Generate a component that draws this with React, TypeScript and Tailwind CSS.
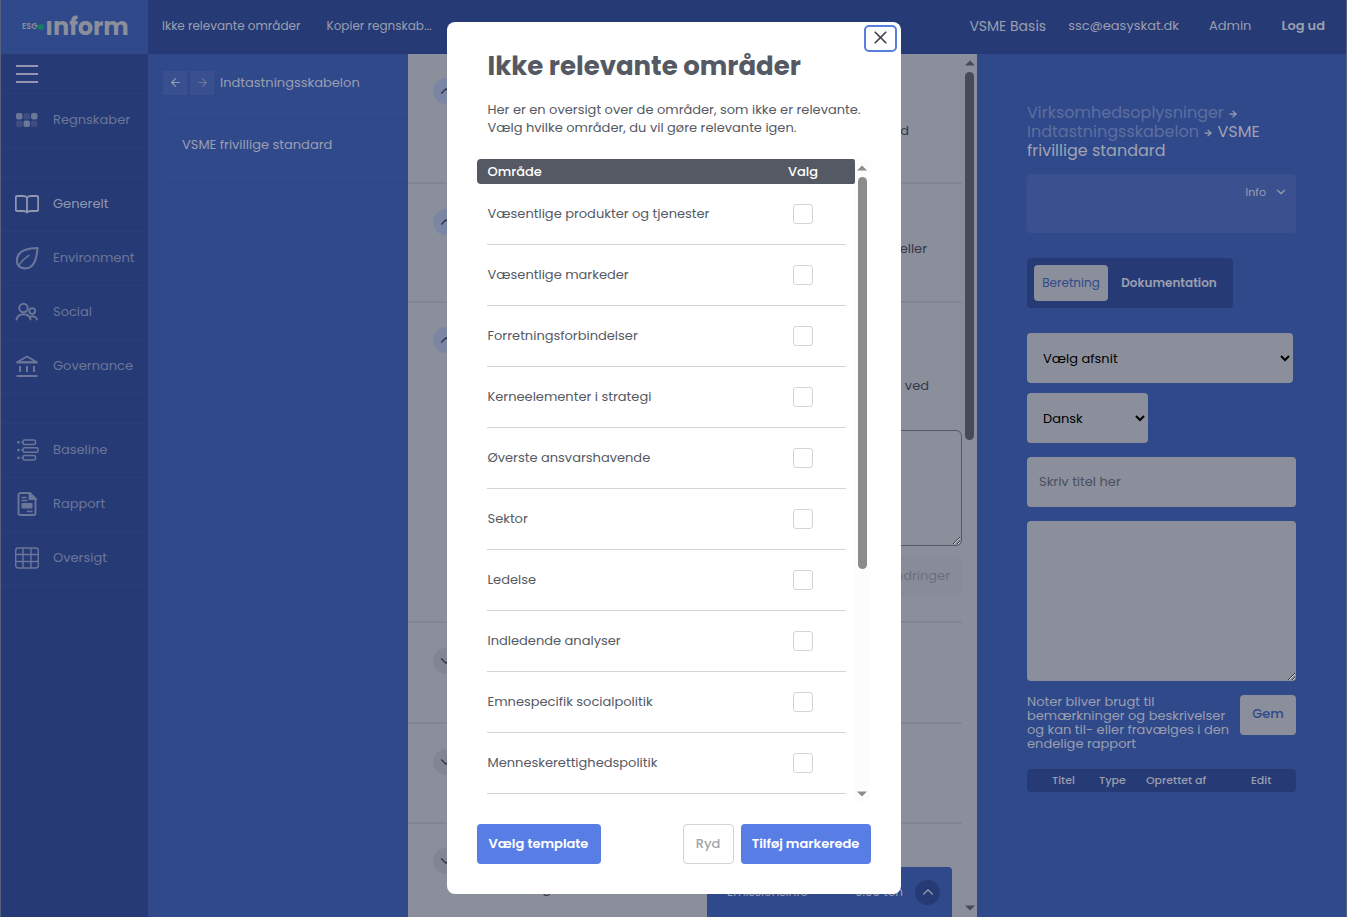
import type { ReactNode } from "react";
import { ArrowLeft, ArrowRight, ChevronDown, ChevronUp, X } from "lucide-react";

const omraader = [
  "Væsentlige produkter og tjenester",
  "Væsentlige markeder",
  "Forretningsforbindelser",
  "Kerneelementer i strategi",
  "Øverste ansvarshavende",
  "Sektor",
  "Ledelse",
  "Indledende analyser",
  "Emnespecifik socialpolitik",
  "Menneskerettighedspolitik",
];

function GridIcon() {
  return (
    <svg width="24" height="24" viewBox="0 0 24 24" fill="currentColor">
      <rect x="1" y="5" width="6.500" height="6.500" rx="2" />
      <rect x="8.500" y="5" width="6.500" height="6.500" rx="2" opacity=".35" />
      <rect x="16" y="5" width="6.500" height="6.500" rx="2" />
      <rect x="1" y="12.500" width="6.500" height="6.500" rx="2" opacity=".35" />
      <rect x="8.500" y="12.500" width="6.500" height="6.500" rx="2" />
      <rect x="16" y="12.500" width="6.500" height="6.500" rx="2" opacity=".35" />
    </svg>
  );
}

function BookIcon() {
  return (
    <svg width="24" height="24" viewBox="0 0 24 24" fill="none" stroke="currentColor" strokeWidth="1.800" strokeLinejoin="round" strokeLinecap="round">
      <path d="M12 5.500C11 4.200 9.500 4 8 4H2.200a1.400 1.400 0 0 0-1.400 1.400v12.200A1.400 1.400 0 0 0 2.200 19H8c1.800 0 3.200.3 4 1.500.8-1.200 2.200-1.500 4-1.500h5.800a1.400 1.400 0 0 0 1.400-1.400V5.400A1.400 1.400 0 0 0 21.800 4H16c-1.500 0-3 .2-4 1.500zM12 5.500v15" />
    </svg>
  );
}

function LeafIcon() {
  return (
    <svg width="24" height="24" viewBox="0 0 24 24" fill="none" stroke="currentColor" strokeWidth="2.100" strokeLinejoin="round" strokeLinecap="round">
      <path d="M22.500 2C14 2.300 7 4 4 8 1.200 11.600 1.200 17.500 3.700 20c3 3 9.500 3.200 12.800.2C20.500 16.500 22 9.500 22.500 2z" />
      <path d="M3.700 20C6 15.500 9 12.500 14 9.300" strokeWidth="1.500" />
    </svg>
  );
}

function PeopleIcon() {
  return (
    <svg width="24" height="24" viewBox="0 0 24 24" fill="none" stroke="currentColor" strokeWidth="1.900" strokeLinecap="round">
      <circle cx="8.500" cy="8" r="4.200" />
      <circle cx="17.200" cy="11" r="2.900" />
      <path d="M1.500 19.500c.7-3.500 3.500-5.300 7-5.300s6.300 1.800 7 5.300M15.300 16.800c2.800-1.300 6-.3 6.700 2.700" />
    </svg>
  );
}

function BankIcon() {
  return (
    <svg width="24" height="24" viewBox="0 0 24 24" fill="none" stroke="currentColor" strokeWidth="1.700">
      <path d="M2.400 8 12 2.400 21.600 8z" strokeLinejoin="round" />
      <path d="M1.500 8.600h21M1.500 22h21" strokeWidth="2" />
      <path d="M5 12v6M12 12v6M19 12v6" strokeWidth="2" />
    </svg>
  );
}

function BaselineIcon() {
  return (
    <svg width="24" height="24" viewBox="0 0 24 24" fill="none" stroke="currentColor" strokeWidth="1.500">
      <rect x="8" y="2" width="12.500" height="4.500" rx="1.500" />
      <rect x="8" y="9.700" width="15" height="4.500" rx="1.500" />
      <rect x="8" y="17.500" width="12.500" height="4.500" rx="1.500" />
      <g fill="currentColor" stroke="none">
        <circle cx="3.500" cy="4.300" r="1.300" />
        <circle cx="3.500" cy="12" r="1.300" />
        <circle cx="3.500" cy="19.700" r="1.300" />
      </g>
      <path d="M6.300 4.300H8M6.300 12H8M6.300 19.700H8" />
    </svg>
  );
}

function ReportIcon() {
  return (
    <svg width="24" height="24" viewBox="0 0 24 24" fill="none" stroke="currentColor" strokeWidth="1.900">
      <path d="M5.500 1h9.300L20.500 6.500V21a2 2 0 0 1-2 2h-13a2 2 0 0 1-2-2V3a2 2 0 0 1 2-2z" strokeLinejoin="round" />
      <path d="M14.500 1v6h6z" fill="currentColor" />
      <rect x="6.500" y="11" width="11" height="5.500" rx="1" fill="currentColor" stroke="none" />
      <path d="M6.500 5.500h5M6.500 8.500h6M12 19.500h5.500" strokeWidth="1.300" />
    </svg>
  );
}

function TableIcon() {
  return (
    <svg width="24" height="24" viewBox="0 0 24 24" fill="none" stroke="currentColor" strokeWidth="1.400">
      <rect x=".7" y="2" width="22.600" height="20" rx="2.500" />
      <path d="M.7 8.500h22.600M.7 15.500h22.600M8 2v20M16 2v20" />
    </svg>
  );
}

function NavItem({ icon, label, active = false }: { icon: ReactNode; label: string; active?: boolean }) {
  return (
    <a
      href="#"
      className={
        "flex h-[54px] items-center gap-[14px] border-b border-[#2a3e7a] pb-0.5 pl-[14px] " +
        (active ? "text-[#9097ae]" : "text-[#6c7699]")
      }
    >
      {icon}
      <span>{label}</span>
    </a>
  );
}

function ScrollBar({ className, thumb, fade }: { className: string; thumb: string; fade: string }) {
  return (
    <div aria-hidden="true" className={"flex w-[15px] shrink-0 flex-col items-center " + className}>
      <svg width="10" height="6" viewBox="0 0 10 6" className="my-1.5 shrink-0" fill="currentColor">
        <path d="M0 5.500 5 .5l5 5z" />
      </svg>
      <div className="w-full flex-1 px-[3px]">
        <div className={"rounded-full " + thumb} />
      </div>
      <svg width="10" height="6" viewBox="0 0 10 6" className={"shrink-0 " + fade} fill="currentColor">
        <path d="M0 .5h10l-5 5z" />
      </svg>
    </div>
  );
}

function Toggle({ open = false, label }: { open?: boolean; label: string }) {
  return (
    <button
      aria-label={label}
      className={
        "flex size-[26px] items-center justify-center rounded-full text-[#2c3040] " +
        (open ? "bg-[#7a86a3]" : "bg-[#828694]")
      }
    >
      {open ? <ChevronUp size={18} strokeWidth={1.5} /> : <ChevronDown size={18} strokeWidth={1.5} />}
    </button>
  );
}

function TopBar() {
  return (
    <header className="flex h-[54px] shrink-0 bg-[#263a76] text-[#9a9fb0]">
      <a href="#" aria-label="ESG inform" className="flex w-[147px] shrink-0 items-center bg-[#30498b] pl-[21px] text-[#8b8f9b]">
        <span className="text-[8px] font-semibold">ESG</span>
        <svg width="8" height="8" viewBox="0 0 8 8">
          <circle cx="4" cy="4" r="3" fill="#108062" />
        </svg>
        <span className="text-2xl leading-none font-bold">ınform</span>
      </a>
      <nav className="flex items-center gap-[26px] pb-0.5 pl-[14px] text-xs">
        <a href="#">Ikke relevante områder</a>
        <a href="#">Kopier regnskab...</a>
      </nav>
      <nav className="ml-auto flex items-center pr-[21px] pb-0.5 text-sm">
        <span className="mr-[22px]">VSME Basis</span>
        <a href="#" className="mr-[30px] text-[13px]">ssc@easyskat.dk</a>
        <a href="#" className="mr-[30px] text-[13px]">Admin</a>
        <a href="#" className="text-[13px] font-semibold">Log ud</a>
      </nav>
    </header>
  );
}

function Sidebar() {
  return (
    <aside className="w-[147px] shrink-0 bg-[#263a76] text-[13px]">
      <div className="flex h-10 items-center border-b border-[#2a3e7a] pl-[15px] text-[#9097ae]">
        <button aria-label="Menu">
          <svg width="22" height="18" viewBox="0 0 22 18" stroke="currentColor" strokeWidth="2">
            <path d="M0 1h22M0 9h22M0 17h22" />
          </svg>
        </button>
      </div>
      <NavItem icon={<GridIcon />} label="Regnskaber" />
      <div className="h-[30px] border-b border-[#2a3e7a]" />
      <NavItem icon={<BookIcon />} label="Generelt" active />
      <NavItem icon={<LeafIcon />} label="Environment" />
      <NavItem icon={<PeopleIcon />} label="Social" />
      <NavItem icon={<BankIcon />} label="Governance" />
      <div className="h-[30px] border-b border-[#2a3e7a]" />
      <NavItem icon={<BaselineIcon />} label="Baseline" />
      <NavItem icon={<ReportIcon />} label="Rapport" />
      <NavItem icon={<TableIcon />} label="Oversigt" />
    </aside>
  );
}

function TemplatePanel() {
  return (
    <section className="w-[260px] shrink-0 bg-[#30498b] pl-[15px] text-[13px] text-[#9a9fb0]">
      <div className="flex h-[60px] items-center gap-[3px] border-b border-[#344d8d] pb-0.5">
        <button aria-label="Tilbage" className="flex size-6 items-center justify-center bg-[#385090]">
          <ArrowLeft size={13} />
        </button>
        <button aria-label="Frem" className="flex size-6 items-center justify-center bg-[#385090] text-[#6c7699]">
          <ArrowRight size={13} />
        </button>
        <h2 className="pl-[3px]">Indtastningsskabelon</h2>
      </div>
      <a href="#" className="flex h-16 items-center border-b border-[#344d8d] pb-0.5 pl-[19px]">
        VSME frivillige standard
      </a>
    </section>
  );
}

function Content() {
  return (
    <main className="relative flex min-w-0 flex-1 bg-[#8b8f9b] text-[13px] text-[#33384a]">
      <div className="flex min-w-0 flex-1 flex-col overflow-hidden">
        <section className="min-h-[130px] border-b-2 border-[#828693] pt-6 pl-[25px]">
          <Toggle open label="Fold ind" />
          <p className="pt-[17px] pr-[53px] text-right">med</p>
        </section>
        <section className="min-h-[119px] border-b-2 border-[#828693] pt-[25px] pl-[25px]">
          <Toggle open label="Fold ind" />
          <p className="pt-1 pr-[35px] text-right">eller</p>
        </section>
        <section className="min-h-[320px] border-b-2 border-[#828693] pt-6 pl-[25px]">
          <Toggle open label="Fold ind" />
          <p className="pt-[23px] pr-[33px] pb-[34px] text-right">ved</p>
          <div className="pl-10">
            <textarea aria-label="Svar" className="block h-[116px] w-full rounded-md border border-[#555a68]" />
          </div>
          <div className="flex justify-end pt-2.5">
            <button disabled className="h-10 rounded bg-[#888c99] px-3 text-[#6a6f80]">
              Gem ændringer
            </button>
          </div>
        </section>
        <section className="min-h-[101px] border-b-2 border-[#828693] pt-[25px] pl-[25px]">
          <Toggle label="Fold ud" />
        </section>
        <section className="min-h-[100px] border-b-2 border-[#828693] pt-[25px] pl-[25px]">
          <Toggle label="Fold ud" />
        </section>
        <section className="pt-6 pl-[25px]">
          <Toggle label="Fold ud" />
          <p className="pt-[5px] pl-10">Omsætning</p>
        </section>
      </div>
      <ScrollBar className="text-[#474b57]" thumb="h-[368px] bg-[#474b57]" fade="mb-1.5" />
      {/* floating emission summary */}
      <div className="absolute right-[25px] bottom-0 flex h-[50px] w-[245px] items-center rounded-t bg-[#30498b] pr-3 pl-5 text-xs text-[#9a9fb0]">
        <span>Emissionsinfo</span>
        <span className="ml-auto">0.00 ton</span>
        <button aria-label="Vis emissioner" className="ml-3 flex size-[25px] items-center justify-center rounded-full bg-[#263a76]">
          <ChevronUp size={18} strokeWidth={1.5} />
        </button>
      </div>
    </main>
  );
}

function Arrow() {
  return <ArrowRight size={10} strokeWidth={3} className="inline" />;
}

function NotesPanel() {
  return (
    <aside className="w-[369px] shrink-0 bg-[#30498b] px-[50px] pt-[49px] text-[13px] text-[#9a9fb0]">
      <h2 className="text-base leading-[19px] text-[#9fa3b2]">
        <span className="text-[#5c6f9f]">Virksomhedsoplysninger</span> <Arrow />
        <br />
        <span className="text-[#5c6f9f]">Indtastningsskabelon</span> <Arrow /> VSME frivillige standard
      </h2>
      <div className="mt-3.5 flex h-[59px] justify-end rounded bg-[#3b508e] px-2 pt-2.5">
        <button className="flex h-4 items-center gap-2 text-[11px]">
          Info <ChevronDown size={14} />
        </button>
      </div>
      <div className="mt-[25px] flex h-[50px] w-[206px] items-center rounded bg-[#263a76] px-[7px] text-xs">
        <button className="h-9 w-[74px] rounded bg-[#8b8f9b] text-[#30498b]">Beretning</button>
        <button className="ml-1 flex-1 font-semibold">Dokumentation</button>
      </div>
      <select aria-label="Vælg afsnit" className="mt-[25px] block h-[50px] w-[266px] rounded bg-[#8b8f9b] pl-3 text-black">
        <option>Vælg afsnit</option>
      </select>
      <select aria-label="Sprog" className="mt-2.5 block h-[50px] w-[121px] rounded bg-[#8b8f9b] pl-3 text-black">
        <option>Dansk</option>
      </select>
      <input
        aria-label="Titel"
        placeholder="Skriv titel her"
        className="mt-3.5 block h-[50px] w-full rounded bg-[#8b8f9b] px-3 placeholder:text-[#4a4f5e]"
      />
      <textarea aria-label="Note" className="mt-3.5 block h-40 w-full rounded bg-[#8b8f9b]" />
      <div className="mt-3.5 flex items-start justify-between">
        <p className="w-[206px] leading-[14px]">
          Noter bliver brugt til bemærkninger og beskrivelser og kan til- eller fravælges i den endelige rapport
        </p>
        <button className="h-10 w-14 rounded bg-[#8b8f9b] pb-0.5 font-medium text-[#30498b]">Gem</button>
      </div>
      <table className="mt-[18px] w-full overflow-hidden rounded bg-[#263a76] text-left text-[11px]">
        <thead>
          <tr className="h-[23px]">
            <th className="w-[72px] pl-[25px] font-medium">Titel</th>
            <th className="w-[47px] font-medium">Type</th>
            <th className="font-medium">Oprettet af</th>
            <th className="w-[45px] font-medium">Edit</th>
          </tr>
        </thead>
      </table>
    </aside>
  );
}

function Modal() {
  return (
    <div className="fixed inset-0 flex items-start justify-center pt-[22px]">
      <div
        role="dialog"
        aria-labelledby="modal-title"
        className="relative flex h-[calc(100vh-45px)] w-[454px] flex-col rounded-lg bg-white px-[30px] pt-[27px] pb-[30px] text-[13px] text-[#555963]"
      >
        <button
          aria-label="Luk"
          className="absolute top-[3px] right-1 flex h-[27px] w-[33px] items-center justify-center rounded-[5px] border-2 border-[#587ee0] pb-0.5 text-[#3f434c]"
        >
          <X size={21} strokeWidth={2} />
        </button>
        <h1 id="modal-title" className="pl-[11px] text-[26px] leading-[34px] font-bold">
          Ikke relevante områder
        </h1>
        <p className="mt-[18px] pl-[11px] leading-[18px]">
          Her er en oversigt over de områder, som ikke er relevante. Vælg hvilke områder, du vil gøre relevante igen.
        </p>
        <div className="mt-[22px] flex min-h-0 flex-1">
          <div className="min-w-0 flex-1 overflow-hidden">
            <table className="w-full">
              <thead>
                <tr className="h-[25px] text-white">
                  <th className="rounded-l bg-[#555963] pl-[11px] text-left font-medium">Område</th>
                  <th className="w-[95px] rounded-r-xs bg-[#555963] pr-2 text-center font-medium">Valg</th>
                </tr>
              </thead>
              <tbody>
                {omraader.map((navn, i) => (
                  <tr key={navn}>
                    <td className="pl-2.5">
                      <label htmlFor={`valg-${i}`} className="flex h-[61px] items-center border-b border-[#d3d4d6] pl-px">
                        {navn}
                      </label>
                    </td>
                    <td className="pr-[9px]">
                      <div className="flex h-[61px] items-center justify-center border-b border-[#d3d4d6]">
                        <input
                          id={`valg-${i}`}
                          type="checkbox"
                          className="size-5 appearance-none rounded-[3px] border border-[#d3d4d6] checked:bg-[#587ee6]"
                        />
                      </div>
                    </td>
                  </tr>
                ))}
              </tbody>
            </table>
          </div>
          <ScrollBar className="mr-px bg-[#fcfcfc] text-[#8b8b8b]" thumb="h-[392px] bg-[#8b8b8b]" fade="mb-1" />
        </div>
        <div className="mt-[23px] flex gap-[7px] font-semibold">
          <button className="mr-auto h-10 w-[124px] rounded bg-[#587ee6] text-white">Vælg template</button>
          <button className="h-10 w-[51px] rounded border border-[#d3d4d6] font-medium text-[#a3a5a9]">Ryd</button>
          <button className="h-10 w-[130px] rounded bg-[#587ee6] text-white">Tilføj markerede</button>
        </div>
      </div>
    </div>
  );
}

export default function App() {
  return (
    <div className="flex h-screen flex-col overflow-hidden border-x border-[#56607f] font-['Poppins','Inter',sans-serif]">
      <TopBar />
      <div className="flex min-h-0 flex-1">
        <Sidebar />
        <TemplatePanel />
        <Content />
        <NotesPanel />
      </div>
      <Modal />
    </div>
  );
}
